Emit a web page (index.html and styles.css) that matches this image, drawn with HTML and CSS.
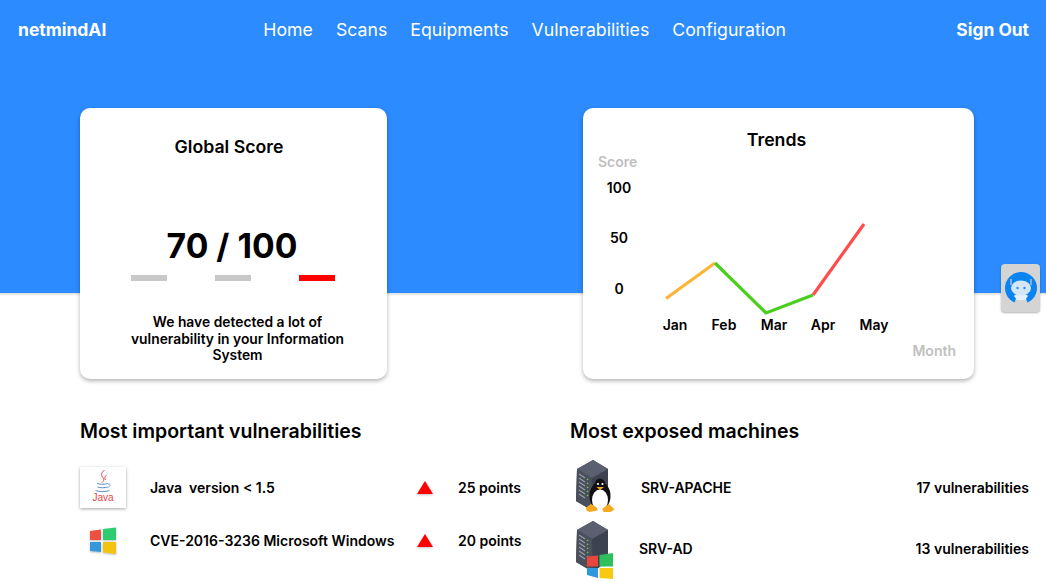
FILE: index.html
```html
<!DOCTYPE html>
<html lang="en">

<head>
  <meta charset="UTF-8">
  <meta name="viewport" content="width=device-width, initial-scale=1.0">
  <title>netmindAI</title>
  <link rel="stylesheet" href="styles.css">
</head>

<body>
  <svg class="defs">
    <defs>
      <g id="server">
        <polygon points="20,1 35,10 35,41 20,52 3,42 4,10" fill="#3d4250" />
        <polygon points="20,1 35,10 19,19 4,10" fill="#5a6070" />
        <polygon points="4,10 19,19 20,52 3,42" fill="#4a4f5c" />
        <g stroke="#9aa0aa" stroke-width="1.2">
          <line x1="6" y1="15" x2="12" y2="19" />
          <line x1="6" y1="19" x2="12" y2="23" />
          <line x1="6" y1="23" x2="12" y2="27" />
          <line x1="6" y1="27" x2="12" y2="31" />
          <line x1="6" y1="31" x2="12" y2="35" />
          <line x1="6" y1="35" x2="12" y2="39" />
        </g>
        <g stroke="#6fd34f" stroke-width="1.2" stroke-dasharray="1.5 2">
          <line x1="14" y1="20" x2="17" y2="22" />
          <line x1="14" y1="24" x2="17" y2="26" />
          <line x1="14" y1="28" x2="17" y2="30" />
          <line x1="14" y1="32" x2="17" y2="34" />
          <line x1="14" y1="36" x2="17" y2="38" />
        </g>
      </g>
    </defs>
  </svg>

  <div class="page">
    <header class="topbar">
      <span class="logo">netmindAI</span>
      <nav class="nav">
        <a>Home</a>
        <a>Scans</a>
        <a>Equipments</a>
        <a>Vulnerabilities</a>
        <a>Configuration</a>
      </nav>
      <a class="signout">Sign Out</a>
    </header>

    <section class="cards">
      <div class="card score-card">
        <h2>Global Score</h2>
        <div class="score">70 / 100</div>
        <div class="score-bars">
          <span class="bar"></span>
          <span class="bar"></span>
          <span class="bar bar-red"></span>
        </div>
        <p>We have detected a lot of vulnerability in your Information System</p>
      </div>

      <div class="card trend-card">
        <h2>Trends</h2>
        <!-- chart coordinates are relative to the card -->
        <svg class="chart" viewBox="0 0 391 271" width="391" height="271">
          <text class="axis" x="15" y="59">Score</text>
          <text class="tick" x="36" y="85" text-anchor="middle">100</text>
          <text class="tick" x="36" y="135" text-anchor="middle">50</text>
          <text class="tick" x="36" y="186" text-anchor="middle">0</text>
          <g fill="none" stroke-width="3.2">
            <polyline points="83,190.500 132,155" stroke="#fdb537" />
            <polyline points="132,155 183,205 230,187" stroke="#4bcf1f" />
            <polyline points="230,187 281,116" stroke="#ff4d4d" />
          </g>
          <text class="tick" x="92" y="222" text-anchor="middle">Jan</text>
          <text class="tick" x="141" y="222" text-anchor="middle">Feb</text>
          <text class="tick" x="191" y="222" text-anchor="middle">Mar</text>
          <text class="tick" x="240" y="222" text-anchor="middle">Apr</text>
          <text class="tick" x="291" y="222" text-anchor="middle">May</text>
          <text class="axis" x="373" y="248" text-anchor="end">Month</text>
        </svg>
      </div>
    </section>

    <section class="lists">
      <div class="list list-vulns">
        <h3>Most important vulnerabilities</h3>
        <div class="vuln-row">
          <div class="java-tile">
            <svg viewBox="0 0 46 41" width="46" height="41">
              <path d="M24.500 3c-3 3-4 4.500-2 7s1.500 3.500-.5 5.500M26.500 8c-2 2-2 3-1 5" fill="none" stroke="#e2474b" stroke-width="1" />
              <path d="M17 16.500c3 1 8 1 11 0M17.500 20c3 1 7 1 10 0M15.500 23.500c4 1.500 10 1.500 14 0" fill="none" stroke="#5b8fc7" stroke-width="1" />
              <path d="M28 17c3-.5 3 2.500-.5 3.500" fill="none" stroke="#5b8fc7" stroke-width=".8" />
              <text class="java-word" x="23" y="34" text-anchor="middle">Java</text>
            </svg>
          </div>
          <span class="vuln-name">Java&nbsp; version &lt; 1.5</span>
          <span class="arrow"></span>
          <span class="points">25 points</span>
        </div>
        <div class="vuln-row vuln-row-win">
          <div class="win-slot">
            <svg viewBox="0 0 28 28" width="28" height="28">
              <polygon points="1,4 12,2.500 12,13 1,13" fill="#ec5040" />
              <polygon points="14,2 27,0.500 27,13 14,13" fill="#2ecc71" />
              <polygon points="1,15 12,15 12,25 1,24" fill="#3498db" />
              <polygon points="14,15 27,15 27,27 14,25.500" fill="#f1c40f" />
            </svg>
          </div>
          <span class="vuln-name">CVE-2016-3236 Microsoft Windows</span>
          <span class="arrow"></span>
          <span class="points">20 points</span>
        </div>
      </div>

      <div class="list list-machines">
        <h3>Most exposed machines</h3>
        <div class="machine-row">
          <svg class="machine-icon" viewBox="0 0 46 56" width="46" height="56">
            <use href="#server" />
            <ellipse cx="27" cy="37" rx="10.500" ry="14" fill="#111" />
            <ellipse cx="27" cy="26.500" rx="5.500" ry="7" fill="#111" />
            <ellipse cx="27" cy="41" rx="8" ry="10.500" fill="#fff" />
            <circle cx="25" cy="25" r="1.100" fill="#fff" />
            <circle cx="29.500" cy="25" r="1.100" fill="#fff" />
            <polygon points="23.500,28 31,28 27.200,31" fill="#f4a921" />
            <path d="M18 45l6 3.500 .5 3-8 1.500-3-1.500-.5-3zM36 45l5.500 5.500-4 2.500-7 0-1-3.500z" fill="#f4a921" />
          </svg>
          <span class="machine-name name-apache">SRV-APACHE</span>
          <span class="machine-count">17 vulnerabilities</span>
        </div>
        <div class="machine-row machine-row-ad">
          <svg class="machine-icon" viewBox="0 0 46 56" width="46" height="56">
            <use href="#server" />
            <polygon points="14,36.500 25,35.500 25,46.500 14,46.500" fill="#e8453c" />
            <polygon points="26.500,35 40,33 40,46.500 26.500,46.500" fill="#2fbf5b" />
            <polygon points="14,48 25,48 25,58 14,55" fill="#2f97dc" />
            <polygon points="26.500,48 40,48 40,59 26.500,58" fill="#f7c911" />
          </svg>
          <span class="machine-name">SRV-AD</span>
          <span class="machine-count">13 vulnerabilities</span>
        </div>
      </div>
    </section>

    <!-- floating help bot -->
    <div class="bot">
      <svg viewBox="0 0 32 32" width="32" height="32">
        <circle cx="16" cy="16" r="16" fill="#0b84f3" />
        <polygon points="12,24 20,24 23,32 9,32" fill="#d4d4d4" />
        <path d="M6 7v6M26 7v6" stroke="#a9bccb" stroke-width="1.600" />
        <path d="M9 24c2-3 12-3 14 0l-3 4h-8z" fill="#e8f1f8" />
        <ellipse cx="16" cy="16" rx="10" ry="7.500" fill="#d3e7f6" />
        <circle cx="12.500" cy="16" r="1.200" fill="#2b8bff" />
        <circle cx="19.500" cy="16" r="1.200" fill="#2b8bff" />
      </svg>
    </div>
  </div>
</body>

</html>
```

FILE: styles.css
```css
body {
  margin: 0;
  overflow: hidden;
  font-family: "Inter", "Liberation Sans", sans-serif;
  color: #000;
}

.defs {
  position: absolute;
  width: 0;
  height: 0;
}

.page {
  position: relative;
  width: 1046px;
  height: 582px;
  overflow: hidden;
  background: linear-gradient(#2b8bff 293px, #dcdcdc 293px, #fff 296px);
}

/* top bar */
.topbar {
  display: flex;
  align-items: center;
  height: 59px;
  padding: 0 17px 1px 18px;
  box-sizing: border-box;
  color: white;
  font-size: 17.7px;
}

.logo {
  font-weight: 700;
  font-size: 17.5px;
}

.nav {
  display: flex;
  gap: 23px;
  margin-left: 157px;
}

.signout {
  margin-left: auto;
  font-size: 17.4px;
  font-weight: 700;
}

/* cards */
.cards {
  display: flex;
  gap: 196px;
  margin-top: 49px;
  padding-left: 80px;
}

.card {
  position: relative;
  box-sizing: border-box;
  height: 271px;
  background-color: white;
  border-radius: 10px;
  box-shadow: 0 2px 4px rgba(0, 0, 0, 0.3);
}

.card h2 {
  margin: 0;
  font-size: 17.7px;
  font-weight: 600;
  line-height: 22px;
  text-align: center;
}

.score-card {
  width: 307px;
  padding-top: 28px;
}

.score-card h2 {
  padding-right: 9px;
}

.score {
  margin-top: 67px;
  padding-right: 3px;
  font-size: 33.7px;
  font-weight: 700;
  line-height: 42px;
  text-align: center;
}

.score-bars {
  display: flex;
  justify-content: space-between;
  margin: 8px 52px 0 51px;
}

.bar {
  width: 36px;
  height: 6px;
  background-color: #c8c8c8;
}

.bar-red {
  background-color: #ff0000;
}

.score-card p {
  margin: 33px 40px 0 48px;
  font-size: 13.85px;
  font-weight: 600;
  line-height: 16.500px;
  text-align: center;
}

.trend-card {
  width: 391px;
  padding-top: 21px;
}

.trend-card h2 {
  padding-right: 4px;
}

.chart {
  position: absolute;
  top: 0;
  left: 0;
}

.axis {
  font-size: 14px;
  font-weight: 600;
  fill: #c0c0c0;
}

.tick {
  font-size: 14px;
  font-weight: 600;
}

/* lists */
.lists {
  display: flex;
  gap: 49px;
  margin-top: 40px;
  padding-left: 80px;
}

.list {
  font-size: 14px;
  font-weight: 600;
}

.list h3 {
  margin: 0;
  font-size: 19.5px;
  font-weight: 600;
  line-height: 24px;
}

.list-vulns {
  width: 441px;
}

.list-machines {
  width: 459px;
}

.vuln-row {
  display: grid;
  grid-template-columns: 70px 267px 41px auto;
  align-items: center;
  height: 41px;
  margin-top: 24px;
}

.vuln-row-win {
  margin-top: 12px;
}

.java-tile {
  width: 46px;
  height: 41px;
  background-color: white;
  box-shadow: 0 1px 3px rgba(0, 0, 0, 0.35);
}

.java-tile svg,
.win-slot svg {
  display: block;
}

.win-slot svg {
  filter: drop-shadow(0 1px 1px rgba(0, 0, 0, 0.25));
}

.java-word {
  font-family: "Liberation Sans", sans-serif;
  font-size: 10px;
  font-weight: 400;
  fill: #e2474b;
}

.win-slot {
  padding-left: 9px;
}

.vuln-name {
  white-space: nowrap;
}

.arrow {
  width: 0;
  height: 0;
  border-left: 8px solid transparent;
  border-right: 8px solid transparent;
  border-bottom: 13px solid #ff0000;
  filter: drop-shadow(0 1px 1px rgba(0, 0, 0, 0.25));
}

.points {
  white-space: nowrap;
}

.machine-row {
  display: flex;
  align-items: center;
  height: 56px;
  margin-top: 5px;
}

.list-machines h3 + .machine-row {
  margin-top: 16px;
}

.machine-icon {
  flex: none;
  margin-left: 3px;
  overflow: visible;
}

.machine-name {
  margin-left: 20px;
}

.name-apache {
  margin-left: 22px;
}

.machine-count {
  margin-left: auto;
}

/* floating bot */
.bot {
  position: absolute;
  top: 264px;
  left: 1001px;
  display: flex;
  align-items: center;
  justify-content: center;
  width: 39px;
  height: 48px;
  background-color: #d4d4d4;
  border-radius: 4px;
  box-shadow: 0 1px 2px rgba(0, 0, 0, 0.3);
}
```
